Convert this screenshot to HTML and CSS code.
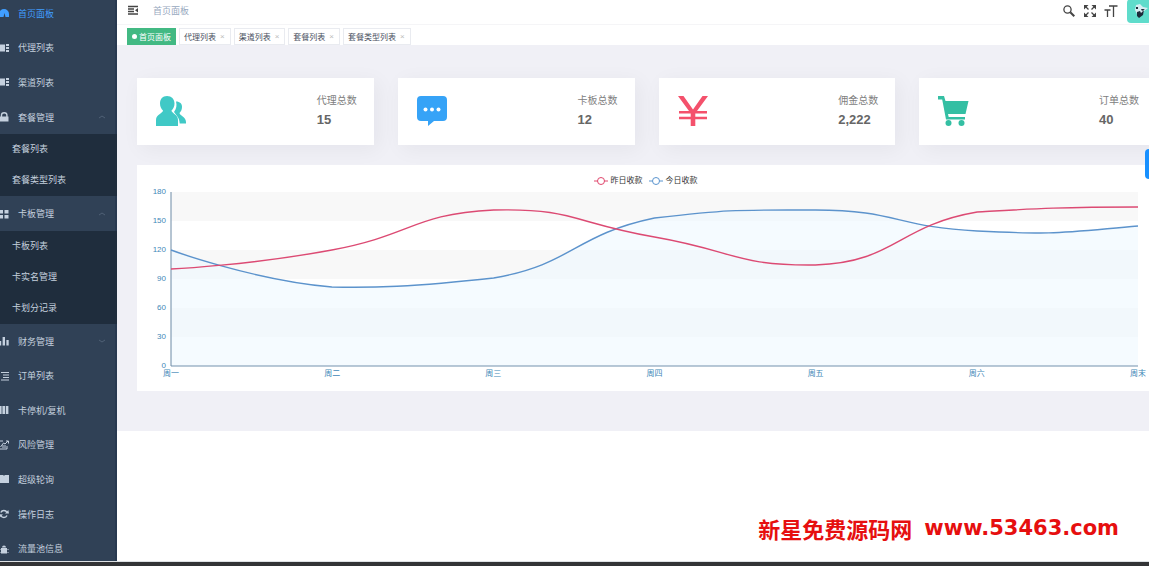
FILE: index.html
```
<!DOCTYPE html>
<html lang="zh-CN">
<head>
<meta charset="utf-8">
<title>首页面板</title>
<link rel="stylesheet" href="styles.css">
</head>
<body>
<div class="app">
  <nav class="sidebar">
    <ul class="menu">
      <li class="item"><a class="active" href="#"><svg class="ico" viewBox="0 0 10 10"><path d="M0 9V6a5 5 0 0 1 5-5 5 5 0 0 1 5 5v3H6.500L5.500 5l-1 4z"/></svg>首页面板</a></li>
      <li class="item"><a href="#"><svg class="ico" viewBox="0 0 10 10"><path d="M0 1.500h6v7H0zM7 1h3v2H7zM7 4h3v2H7zM7 7h3v2H7z"/></svg>代理列表</a></li>
      <li class="item"><a href="#"><svg class="ico" viewBox="0 0 10 10"><path d="M0 1.500h6v7H0zM7 1h3v2H7zM7 4h3v2H7zM7 7h3v2H7z"/></svg>渠道列表</a></li>
      <li class="item"><a href="#"><svg class="ico" viewBox="0 0 10 10"><path d="M1 4.500h8.500v5H1z"/><path class="line" d="M2.500 5V3a2.700 2.300 0 0 1 5.400 0v2"/></svg>套餐管理<svg class="chev" viewBox="0 0 8 6"><path d="M1 4l3-2 3 2"/></svg></a></li>
      <li class="sub"><ul>
        <li><a href="#">套餐列表</a></li>
        <li><a href="#">套餐类型列表</a></li>
      </ul></li>
      <li class="item"><a href="#"><svg class="ico" viewBox="0 0 10 10"><path d="M0 1h4v3.500H0zM5.500 1h4v3.500h-4zM0 6h4v3.500H0zM5.500 6h4v3.500h-4z"/></svg>卡板管理<svg class="chev" viewBox="0 0 8 6"><path d="M1 4l3-2 3 2"/></svg></a></li>
      <li class="sub"><ul>
        <li><a href="#">卡板列表</a></li>
        <li><a href="#">卡实名管理</a></li>
        <li><a href="#">卡划分记录</a></li>
      </ul></li>
      <li class="item"><a href="#"><svg class="ico" viewBox="0 0 10 10"><path d="M0 5h2.200v4.500H0zM3.600 1h2.400v8.500H3.600zM7.400 4h2.300v5.500H7.400z"/></svg>财务管理<svg class="chev" viewBox="0 0 8 6"><path d="M1 2l3 2 3-2"/></svg></a></li>
      <li class="item"><a href="#"><svg class="ico" viewBox="0 0 10 10"><path class="line thin" d="M2 1.500h8M4 4H10M4 6.500H10M2 9h8"/></svg>订单列表</a></li>
      <li class="item"><a href="#"><svg class="ico" viewBox="0 0 10 10"><path d="M0 1h2.600v8H0zM3.400 1h2.600v8H3.400zM6.800 1h2.600v8H6.800z"/></svg>卡停机/复机</a></li>
      <li class="item"><a href="#"><svg class="ico" viewBox="0 0 10 10"><path class="line thin" d="M4 1H0v8h8V6M1.500 7l3-4 1.500 1 3-3M7 1h2.500v2.500M4 5v3M6 5v3"/></svg>风险管理</a></li>
      <li class="item"><a href="#"><svg class="ico" viewBox="0 0 10 10"><path d="M0 1h4l1 .8 1-.8h4V9H0z"/></svg>超级轮询</a></li>
      <li class="item"><a href="#"><svg class="ico" viewBox="0 0 10 10"><path class="line" d="M1.800 3.500a3.400 3.400 0 0 1 6.200 0M8 6.500a3.400 3.400 0 0 1-6.200 0"/><path d="M6 4.500h4L9.300 1zM0 9l.5-3.800L4 5.500z"/></svg>操作日志</a></li>
      <li class="item"><a href="#"><svg class="ico" viewBox="0 0 10 10"><path d="M2 4h6v5.500H2zM3 3.500a2 2 0 0 1 4 0zM.5 5h1v1h-1zM8.500 5h1v1h-1zM.5 8h1v1h-1zM8.500 8h1v1h-1z"/></svg>流量池信息</a></li>
    </ul>
  </nav>

  <div class="page">
    <header class="topbar">
      <button class="tool" aria-label="收起菜单"><svg class="burger" viewBox="0 0 12 10"><path class="stroke" d="M1 1.500h10M1 4h6M1 6.500h6M1 9h10"/><path d="M11 3v4.500L8 5.200z"/></svg></button>
      <span class="crumb">首页面板</span>
      <div class="tools">
        <button class="tool" aria-label="搜索"><svg viewBox="0 0 14 14"><circle class="stroke" cx="5.500" cy="5.500" r="3.600"/><path class="stroke thick" d="M8.300 8.300l4 4"/></svg></button>
        <button class="tool" aria-label="全屏"><svg viewBox="0 0 14 14"><path d="M1 1h4.500L1 5.500zM13 1H8.500L13 5.500zM1 13h4.500L1 8.500zM13 13H8.500L13 8.500z"/><path class="stroke" d="M2 2l3.500 3.500M12 2L8.500 5.500M2 12l3.500-3.500M12 12L8.500 8.500"/></svg></button>
        <button class="tool" aria-label="字号"><svg viewBox="0 0 14 14"><path class="stroke" d="M5 2h8.500M9.500 2v11M.5 6h6M3.500 6v7"/></svg></button>
        <button class="avatar" aria-label="用户"><svg viewBox="0 0 24 24"><path class="face" d="M9 6l4-1 3 3 5 1-4 3-2 4-5-1-2-4z"/><path class="dark" d="M10 13l3-1 1 2 3-3-1 5-4 3-2-2z"/><path class="dark" d="M9 8h2v2H9zM14 10h4l-3 2z"/></svg></button>
      </div>
    </header>
    <nav class="tags">
      <a class="tag on" href="#"><i class="dot"></i>首页面板</a>
      <a class="tag" href="#">代理列表<span class="x">×</span></a>
      <a class="tag" href="#">渠道列表<span class="x">×</span></a>
      <a class="tag" href="#">套餐列表<span class="x">×</span></a>
      <a class="tag" href="#">套餐类型列表<span class="x">×</span></a>
    </nav>

    <main class="dash">
      <div class="board">
        <section class="cards">
          <article class="card teal"><svg viewBox="0 0 32 32"><path d="M12 1c-4.500 0-7 3-7 7.500 0 3 1.300 5.500 3 7C8 18 1 19.500 1 25v6h22v-6c0-5.500-6.500-7-6.500-9.500 1.700-1.500 3-4 3-7C19.500 4 16.500 1 12 1z"/><path d="M21 6.500c4 0 6 2.300 6 5.500 0 2.500-1 4.500-2.500 6 0 2.300 6.500 4 6.500 9v1.500h-6.300c-.2-6-3.700-8.500-5.700-11.500 2.500-3 3-7 2-10.500z"/></svg><div class="stat"><p>代理总数</p><b>15</b></div></article>
          <article class="card blue"><svg viewBox="0 0 32 32"><path d="M5 1h22a4 4 0 0 1 4 4v17a4 4 0 0 1-4 4h-9l-6 5v-5H5a4 4 0 0 1-4-4V5a4 4 0 0 1 4-4z"/><g class="hole"><circle cx="9.500" cy="14.500" r="2"/><circle cx="16" cy="14.500" r="2"/><circle cx="22.500" cy="14.500" r="2"/></g></svg><div class="stat"><p>卡板总数</p><b>12</b></div></article>
          <article class="card red"><svg viewBox="0 0 32 32"><path d="M1 1h5.500L16 14.500 25.500 1H31L20 16h10v2.500H18.300v3.200H30v2.500H18.300V31h-4.600v-6.800H2v-2.500h11.700v-3.200H2V16h10z"/></svg><div class="stat"><p>佣金总数</p><b>2,222</b></div></article>
          <article class="card green"><svg viewBox="0 0 32 32"><path d="M1 1h6l1.500 5H31.500l-3 13H11l.7 3H28v2.500H9L5.200 4.500H1z"/><circle cx="11.500" cy="28" r="3"/><circle cx="24.500" cy="28" r="3"/></svg><div class="stat"><p>订单总数</p><b>40</b></div></article>
        </section>

        <section class="chart">
          <div class="legend">
            <span class="key pink"><svg viewBox="0 0 14 10"><path d="M0 5h14"/><circle cx="7" cy="5" r="3.500"/></svg>昨日收款</span>
            <span class="key sky"><svg viewBox="0 0 14 10"><path d="M0 5h14"/><circle cx="7" cy="5" r="3.500"/></svg>今日收款</span>
          </div>
          <div class="plot">
            <div class="ylabels"><span>180</span><span>150</span><span>120</span><span>90</span><span>60</span><span>30</span><span>0</span></div>
            <svg class="graph" viewBox="0 0 968 174" preserveAspectRatio="none">
              <path class="band" d="M0 0h968v29H0zM0 58h968v29H0zM0 116h968v29H0z"/>
              <path class="area" d="M0 58C0 58 81 88 161 95C200 96 242 95 323 86C403 72 403 43 484 26C565 17 565 18 645 18C726 18 726 35 807 39C888 43 888 41 968 34V174H0z"/>
              <path class="yaxis" d="M0 0V174"/>
              <path class="xaxis" d="M0 174H968"/>
              <path class="curve sky" d="M0 58C0 58 81 88 161 95C200 96 242 95 323 86C403 72 403 43 484 26C565 17 565 18 645 18C726 18 726 35 807 39C888 43 888 41 968 34"/>
              <path class="curve pink" d="M0 77C0 77 81 73 161 58C242 43 242 22 323 18C403 16 403 31 484 45C565 59 565 74 645 73C726 70 726 34 807 20C860 17 888 15 968 15"/>
            </svg>
            <div class="xlabels"><span>周一</span><span>周二</span><span>周三</span><span>周四</span><span>周五</span><span>周六</span><span>周末</span></div>
          </div>
        </section>
      </div>
    </main>
  </div>
  <button class="handle" aria-label="设置"></button>
  <p class="mark"><span>新星免费源码网</span><span class="url">www.53463.com</span></p>
  <div class="taskbar"></div>
</div>
</body>
</html>
```
FILE: styles.css
```
* { box-sizing: border-box; }
body { margin: 0; font-family: "Liberation Sans", "Noto Sans CJK SC", sans-serif; background: #fff; }
ul { list-style: none; margin: 0; padding: 0; }
p { margin: 0; }
a { color: inherit; text-decoration: none; }
button { border: 0; padding: 0; background: none; }
svg { display: block; flex: none; }

.app { position: relative; display: flex; height: 100vh; overflow: hidden; }

.sidebar { flex: none; width: 117px; overflow: hidden; background: #304156; color: #c4d0de; font-size: 9px; box-shadow: inset -2px 0 #283950; }
.menu { display: flex; flex-direction: column; height: calc(100vh + 4px); margin-top: -4px; }
.item { flex: 1 0 30px; }
.item a { display: flex; align-items: center; height: 100%; padding-right: 11px; }
.item .active { color: #409eff; }
.ico { width: 10px; height: 10px; margin-left: -1px; margin-right: 9px; fill: currentColor; }
.ico .line { fill: none; stroke: currentColor; stroke-width: 1.4; }
.ico .thin { stroke-width: 1; }
.chev { width: 8px; height: 6px; margin-left: auto; fill: none; stroke: #506176; }
.sub { flex: none; background: #1f2d3d; }
.sub a { display: block; padding-left: 12px; line-height: 31px; }

.page { flex: 1; min-width: 0; }
.topbar { display: flex; align-items: center; height: 25px; padding-left: 10px; border-bottom: 1px solid #f5f5f7; }
.topbar > .tool { margin-bottom: 5px; }
.tool svg { width: 14px; height: 14px; fill: #444; }
.tool .burger { width: 12px; height: 10px; }
.stroke { fill: none; stroke: #444; stroke-width: 1.3; }
.thick { stroke-width: 2; }
.crumb { margin-left: 14px; margin-bottom: 4px; font-size: 9px; color: #97a8be; }
.tools { display: flex; gap: 7px; margin-left: auto; align-items: center; margin-bottom: 3px; }
.avatar { width: 24px; height: 24px; margin-left: 2px; margin-right: -2px; border-radius: 4px; background: #5fdccb; }
.avatar svg { width: 24px; height: 24px; }
.face { fill: #d7eef2; }
.dark { fill: #1d2b3a; }

.tags { display: flex; gap: 3px; height: 20px; padding: 3px 10px 0; font-size: 8px; color: #495060; }
.tag { display: flex; align-items: center; height: 17px; padding: 0 4px; border: 1px solid #e9ebf0; }
.tag.on { background: #42b983; border-color: #42b983; color: #fff; }
.dot { width: 5px; height: 5px; margin-right: 2px; border-radius: 50%; background: #fff; }
.x { margin-left: 4px; margin-right: 1px; color: #bbb; }

.dash { padding: 33px 0 40px 20px; overflow: hidden; background: #f0f0f6; }
.board { margin-right: -7px; }
.cards { display: grid; grid-template-columns: repeat(4, 1fr); gap: 24px; margin-bottom: 20px; }
.card { display: flex; align-items: center; justify-content: space-between; height: 67px; padding: 0 17px 2px 18px; background: #fff; box-shadow: 4px 4px 20px rgba(0, 0, 40, .05); }
.card svg { width: 32px; height: 32px; fill: currentColor; }
.card .hole { fill: #fff; }
.teal { color: #40c9c6; }
.blue { color: #36a3f7; }
.red { color: #f4516c; }
.green { color: #34bfa3; }
.stat { width: 40px; color: #666; }
.stat p { font-size: 10px; line-height: 18px; color: #808080; white-space: nowrap; }
.stat b { display: block; font-size: 13px; line-height: 20px; }

.chart { padding: 10px 18px 11px 12px; background: #fff; }
.legend { display: flex; justify-content: center; gap: 6px; height: 17px; padding-left: 4px; font-size: 8px; line-height: 12px; color: #333; }
.key { display: flex; gap: 3px; height: 12px; align-items: center; }
.key svg { width: 14px; height: 10px; fill: #fff; stroke: currentColor; }
.key.pink svg { color: #e0466c; }
.key.sky svg { color: #5b95cf; }
.plot { display: grid; grid-template-columns: 17px 1fr; column-gap: 5px; font-size: 8px; color: #3f88b8; }
.ylabels { display: flex; flex-direction: column; justify-content: space-between; align-items: flex-end; margin: -5px 0; line-height: 10px; }
.graph { width: 100%; height: 174px; overflow: visible; }
.band { fill: #f8f8f8; }
.area { fill: #eef8ff; fill-opacity: .6; }
.yaxis, .xaxis, .curve { fill: none; vector-effect: non-scaling-stroke; }
.yaxis { stroke: #6d8aa5; }
.xaxis { stroke: #7391ad; }
.curve { stroke-width: 1.4; }
.curve.pink { stroke: #dc4a73; }
.curve.sky { stroke: #5c93cc; }
.xlabels { grid-column: 2; display: flex; justify-content: space-between; margin: 2px -8px 0; line-height: 12px; }
.xlabels span { width: 16px; }

.handle { position: absolute; right: 0; top: 149px; width: 4px; height: 30px; border-radius: 4px 0 0 4px; background: #1890ff; }
.mark { position: absolute; right: 30px; bottom: 22px; display: flex; align-items: center; gap: 12px; font: bold 22px/32px "Noto Sans CJK SC", sans-serif; color: #e60f0f; white-space: nowrap; }
.url { font: bold 21px/32px "DejaVu Sans", sans-serif; }
.taskbar { position: absolute; left: 0; right: 0; bottom: 0; height: 5px; border-top: 1px solid #dde1e4; background: #333436; }
```
